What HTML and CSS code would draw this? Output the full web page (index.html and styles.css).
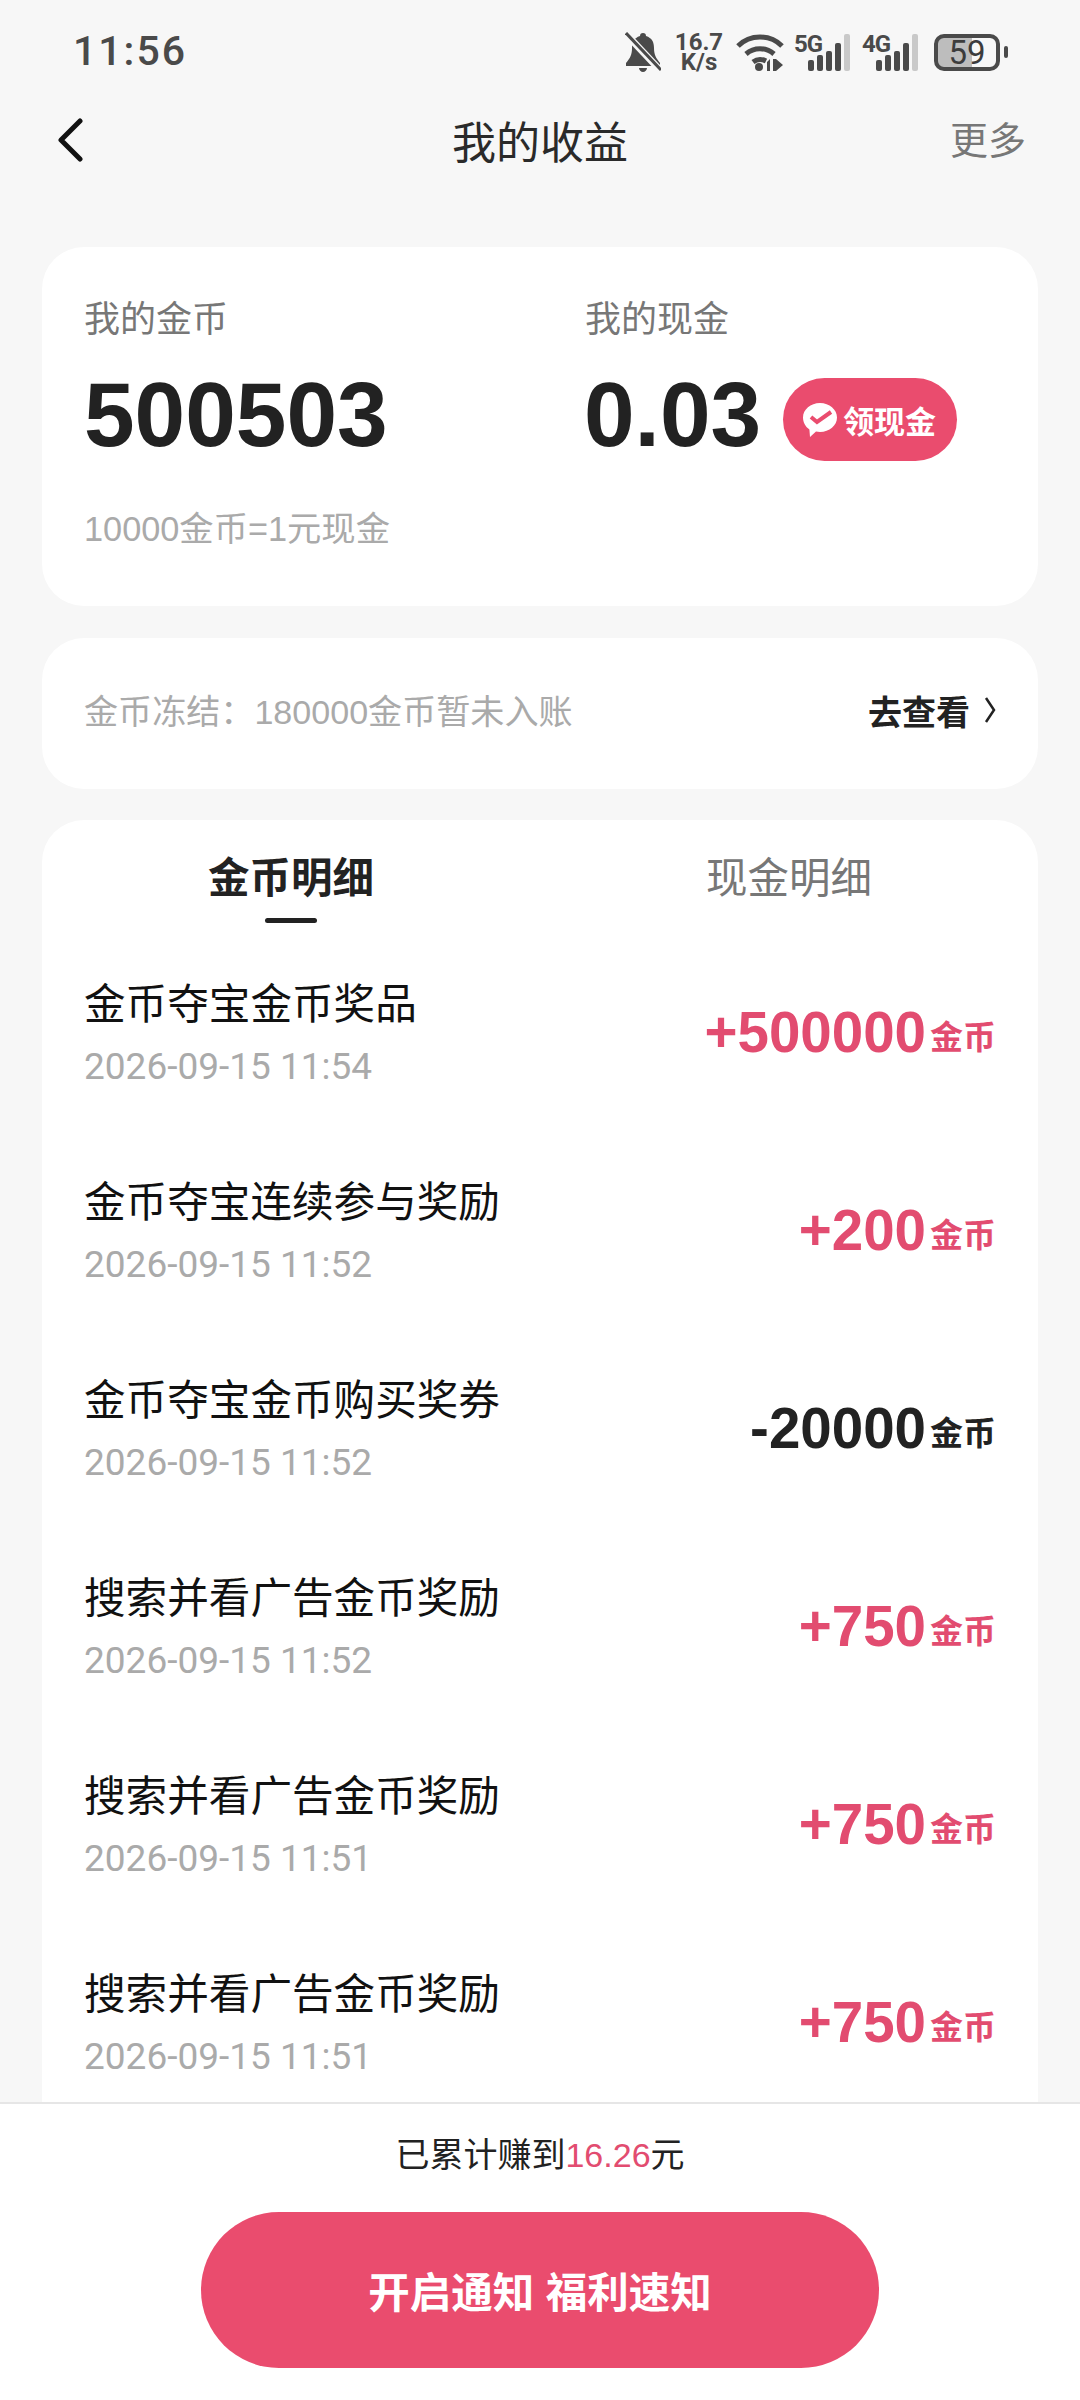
FILE: index.html
```html
<!DOCTYPE html>
<html lang="zh">
<head>
    <meta charset="UTF-8">
    <meta name="viewport" content="width=device-width, initial-scale=1.0">
    <title>我的收益</title>
    <link rel="stylesheet" href="styles.css">
</head>
<body>
    <div class="page">
        <div class="status-bar">
            <span class="clock">11:56</span>
            <div class="status-icons">
                <svg class="bell" viewBox="0 0 36 40" width="36" height="40">
                    <path d="M18 1c2 0 3 1 3 3 6 2 8 6 8 12 0 7 2 10 6 15v3H1v-3c4-5 6-8 6-15 0-6 2-10 8-12 0-2 1-3 3-3zM14 36h8c0 2-2 4-4 4s-4-2-4-4z" fill="#4a4a4a"/>
                    <path d="M1 2l34 36" stroke="#f7f7f7" stroke-width="7"/>
                    <path d="M1 1l35 37" stroke="#4a4a4a" stroke-width="3"/>
                </svg>
                <div class="speed"><span>16.7</span><span>K/s</span></div>
                <svg class="wifi" viewBox="0 0 48 38" width="48" height="38">
                    <g fill="none" stroke="#4a4a4a" stroke-width="5">
                        <path d="M2 13C14 1 34 1 46 13"/>
                        <path d="M10 21c8-7 20-7 28 0"/>
                        <path d="M17 29c4-3 9-3 13-1"/>
                    </g>
                    <circle cx="23" cy="34" r="4" fill="#4a4a4a"/>
                    <path d="M31 29l3-3v12h-3zM37 26h3l7 6-7 6h-3z" fill="#4a4a4a"/>
                </svg>
                <div class="signal">
                    <span class="net">5G</span>
                    <i class="bar b1"></i><i class="bar b2"></i><i class="bar b3"></i><i class="bar b4"></i><i class="bar b5"></i>
                </div>
                <div class="signal">
                    <span class="net">4G</span>
                    <i class="bar b1"></i><i class="bar b2"></i><i class="bar b3"></i><i class="bar b4"></i><i class="bar b5"></i>
                </div>
                <div class="battery">59</div>
                <i class="battery-nub"></i>
            </div>
        </div>

        <div class="nav">
            <svg class="back" viewBox="0 0 26 44" width="26" height="44">
                <path d="M23 3L4 22l19 19" fill="none" stroke="#111" stroke-width="5" stroke-linecap="round" stroke-linejoin="round"/>
            </svg>
            <h1>我的收益</h1>
            <span class="more">更多</span>
        </div>

        <div class="content">
            <div class="card summary">
                <div class="summary-cols">
                    <div>
                        <div class="label">我的金币</div>
                        <div class="big-num">500503</div>
                    </div>
                    <div>
                        <div class="label">我的现金</div>
                        <div class="cash-line">
                            <div class="big-num">0.03</div>
                            <div class="cash-btn">
                                <svg viewBox="0 0 34 36" width="34" height="36">
                                    <path d="M17 1c9.400 0 17 6.500 17 14.500S26.400 30 17 30c-1.400 0-2.800-.2-4-.5L7 35l-.6-7.600C2.500 24.800 0 20.400 0 15.500 0 7.500 7.600 1 17 1z" fill="#fff"/>
                                    <path d="M8 15l6 5L28 10" fill="none" stroke="#ea4c6e" stroke-width="4"/>
                                </svg>
                                <span>领现金</span>
                            </div>
                        </div>
                    </div>
                </div>
                <div class="rate">10000金币=1元现金</div>
            </div>

            <div class="card frozen">
                <span class="frozen-text">金币冻结：180000金币暂未入账</span>
                <div class="frozen-link">
                    <span>去查看</span>
                    <svg viewBox="0 0 12 28" width="12" height="28">
                        <path d="M2 2l8 12-8 12" fill="none" stroke="#222" stroke-width="2.500"/>
                    </svg>
                </div>
            </div>

            <div class="card detail">
                <div class="tabs">
                    <div class="tab active">金币明细</div>
                    <div class="tab">现金明细</div>
                </div>
                <div class="rows">
                    <div class="row">
                        <div>
                            <div class="row-title">金币夺宝金币奖品</div>
                            <div class="row-time">2026-09-15 11:54</div>
                        </div>
                        <div class="amount plus">+500000<small>金币</small></div>
                    </div>
                    <div class="row">
                        <div>
                            <div class="row-title">金币夺宝连续参与奖励</div>
                            <div class="row-time">2026-09-15 11:52</div>
                        </div>
                        <div class="amount plus">+200<small>金币</small></div>
                    </div>
                    <div class="row">
                        <div>
                            <div class="row-title">金币夺宝金币购买奖券</div>
                            <div class="row-time">2026-09-15 11:52</div>
                        </div>
                        <div class="amount">-20000<small>金币</small></div>
                    </div>
                    <div class="row">
                        <div>
                            <div class="row-title">搜索并看广告金币奖励</div>
                            <div class="row-time">2026-09-15 11:52</div>
                        </div>
                        <div class="amount plus">+750<small>金币</small></div>
                    </div>
                    <div class="row">
                        <div>
                            <div class="row-title">搜索并看广告金币奖励</div>
                            <div class="row-time">2026-09-15 11:51</div>
                        </div>
                        <div class="amount plus">+750<small>金币</small></div>
                    </div>
                    <div class="row">
                        <div>
                            <div class="row-title">搜索并看广告金币奖励</div>
                            <div class="row-time">2026-09-15 11:51</div>
                        </div>
                        <div class="amount plus">+750<small>金币</small></div>
                    </div>
                </div>
            </div>
        </div>

        <div class="footer">
            <div class="earned">已累计赚到<span>16.26</span>元</div>
            <button type="button" class="notify-btn">开启通知 福利速知</button>
        </div>
    </div>
</body>
</html>
```

FILE: styles.css
```css
* {
    box-sizing: border-box;
}

body {
    margin: 0;
    background: #f7f7f7;
    font-family: "Liberation Sans", "Noto Sans CJK SC", sans-serif;
    color: #222;
}

.page {
    width: 1080px;
    height: 2400px;
    display: flex;
    flex-direction: column;
    overflow: hidden;
}

/* status bar */
.status-bar {
    height: 104px;
    flex: none;
    padding: 0 72px 0 73px;
    display: flex;
    align-items: center;
    justify-content: space-between;
}

.clock {
    font-family: Roboto, sans-serif;
    font-size: 41px;
    font-weight: 500;
    letter-spacing: 2px;
    color: #4a4a4a;
    margin-top: -2px;
}

.status-icons {
    display: flex;
    align-items: center;
    height: 40px;
}

.bell {
    margin-right: 12px;
}

.speed {
    width: 52px;
    margin-right: 11px;
    display: flex;
    flex-direction: column;
    align-items: center;
    font-family: Roboto, sans-serif;
    font-size: 24px;
    font-weight: 700;
    line-height: 20px;
    color: #4a4a4a;
}

.wifi {
    margin-right: 10px;
}

.signal {
    position: relative;
    width: 56px;
    height: 37px;
    margin-right: 12px;
    display: flex;
    align-items: flex-end;
    justify-content: flex-end;
    gap: 3px;
}

.net {
    position: absolute;
    left: 0;
    top: -1px;
    font-family: Roboto, sans-serif;
    font-size: 24px;
    font-weight: 700;
    line-height: 22px;
    letter-spacing: -1px;
    color: #4a4a4a;
}

.bar {
    width: 6px;
    background: #4a4a4a;
    border-radius: 2px;
}

.b1 { height: 11px; }
.b2 { height: 16px; }
.b3 { height: 20px; }
.b4 { height: 28px; }

.bar.b5 {
    height: 37px;
    background: #c9c9c9;
}

.battery {
    width: 66px;
    height: 37px;
    margin-left: 4px;
    border: 4px solid #4a4a4a;
    border-radius: 10px;
    background: linear-gradient(to right, #bdbdbd 59%, transparent 59%);
    font-family: Roboto, sans-serif;
    font-size: 33px;
    line-height: 29px;
    text-align: center;
    color: #3c3c3c;
}

.battery-nub {
    width: 4px;
    height: 12px;
    margin-left: 4px;
    background: #4a4a4a;
    border-radius: 2px;
}

/* nav */
.nav {
    height: 72px;
    flex: none;
    padding: 0 54px 0 57px;
    display: flex;
    align-items: center;
    justify-content: space-between;
    position: relative;
}

.nav h1 {
    position: absolute;
    left: 0;
    right: 0;
    margin: 0;
    text-align: center;
    font-size: 44px;
    font-weight: 400;
    color: #2a2a2a;
}

.more {
    font-size: 38px;
    color: #777;
    margin-top: -5px;
}

/* cards */
.content {
    flex: 1;
    min-height: 0;
    padding: 71px 42px 0;
    display: flex;
    flex-direction: column;
}

.card {
    background: #fff;
    border-radius: 42px;
    flex: none;
}

.summary {
    height: 359px;
    padding: 48px 42px 0;
}

.summary-cols {
    display: grid;
    grid-template-columns: 501px 1fr;
}

.label {
    font-size: 36px;
    line-height: 50px;
    color: #777;
}

.big-num {
    font-size: 91px;
    font-weight: 700;
    line-height: 100px;
    margin-top: 20px;
    color: #222;
}

.cash-line {
    display: flex;
    align-items: flex-end;
    margin-left: -1px;
}

.cash-btn {
    width: 174px;
    height: 83px;
    margin-left: 22px;
    margin-bottom: 4px;
    padding-left: 20px;
    display: flex;
    align-items: center;
    gap: 6px;
    background: #ea4c6e;
    border-radius: 42px;
    color: #fff;
    font-size: 31px;
    font-weight: 700;
}

.rate {
    margin-top: 39px;
    font-size: 34.300px;
    line-height: 50px;
    color: #aaa;
}

.frozen {
    height: 151px;
    margin-top: 32px;
    padding: 0 42px;
    display: flex;
    align-items: center;
    justify-content: space-between;
}

.frozen-text {
    font-size: 34.100px;
    color: #aaa;
    margin-top: -9px;
}

.frozen-link {
    display: flex;
    align-items: center;
    gap: 14px;
    font-size: 34px;
    font-weight: 700;
    color: #222;
    margin-top: -7px;
}

.detail {
    margin-top: 31px;
    height: 1400px;
    border-radius: 42px 42px 0 0;
}

.tabs {
    display: grid;
    grid-template-columns: 1fr 1fr;
    padding-top: 29px;
}

.tab {
    position: relative;
    height: 60px;
    line-height: 60px;
    text-align: center;
    font-size: 41.500px;
    color: #777;
}

.tab.active {
    font-weight: 700;
    color: #222;
}

.tab.active::after {
    content: "";
    position: absolute;
    left: 50%;
    top: 69px;
    width: 52px;
    height: 5px;
    margin-left: -26px;
    background: #222;
    border-radius: 3px;
}

.rows {
    padding: 65px 42px 0;
    display: flex;
    flex-direction: column;
    gap: 81px;
}

.row {
    height: 117px;
    display: flex;
    align-items: center;
    justify-content: space-between;
}

.row-title {
    font-size: 41.600px;
    line-height: 60px;
    color: #111;
}

.row-time {
    margin-top: 8px;
    font-family: Roboto, sans-serif;
    font-size: 37px;
    line-height: 48px;
    color: #aaa;
}

.amount {
    font-size: 56.500px;
    font-weight: 700;
    color: #222;
}

.amount.plus {
    color: #e24c70;
}

.amount small {
    margin-left: 4px;
    font-size: 33px;
    position: relative;
    top: -3px;
}

/* bottom bar */
.footer {
    height: 298px;
    flex: none;
    position: relative;
    background: #fff;
    border-top: 2px solid #e6e6e6;
    display: flex;
    flex-direction: column;
    align-items: center;
}

.earned {
    margin-top: 26px;
    font-size: 34px;
    line-height: 50px;
    color: #222;
}

.earned span {
    color: #e24c70;
}

.notify-btn {
    width: 678px;
    height: 156px;
    margin-top: 32px;
    border: none;
    border-radius: 78px;
    background: #ea4c6e;
    color: #fff;
    font-family: inherit;
    font-size: 41.500px;
    font-weight: 700;
}
```
